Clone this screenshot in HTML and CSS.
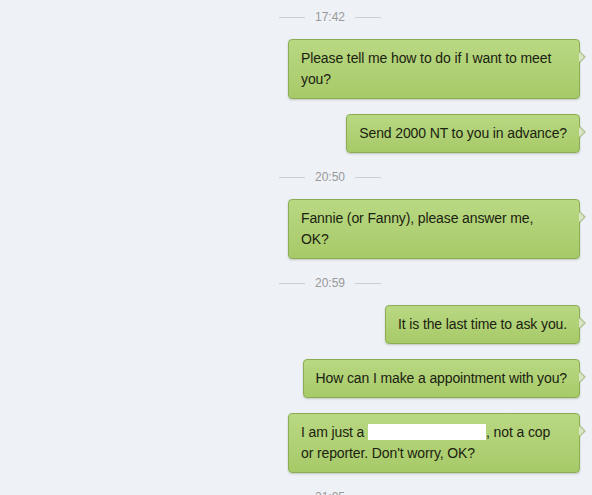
FILE: index.html
```html
<!DOCTYPE html>
<html lang="en">
<head>
    <meta charset="UTF-8">
    <meta name="viewport" content="width=device-width, initial-scale=1.0">
    <title>Chat</title>
    <link rel="stylesheet" href="styles.css">
</head>
<body>
    <div class="chat">
        <div class="time"><span>17:42</span></div>
        <div class="bubble wide">Please tell me how to do if I want to meet<br>you?</div>
        <div class="bubble">Send 2000 NT to you in advance?</div>

        <div class="time"><span>20:50</span></div>
        <div class="bubble wide">Fannie (or Fanny), please answer me,<br>OK?</div>

        <div class="time"><span>20:59</span></div>
        <div class="bubble">It is the last time to ask you.</div>
        <div class="bubble">How can I make a appointment with you?</div>
        <div class="bubble wide">I am just a <span class="redacted"></span>, not a cop<br>or reporter. Don't worry, OK?</div>

        <div class="time"><span>21:05</span></div>
    </div>
</body>
</html>
```

FILE: styles.css
```css
* {
    margin: 0;
    padding: 0;
    box-sizing: border-box;
}

body {
    font-family: 'Liberation Sans', Arial, sans-serif;
    background: #eef1f6;
    height: 495px;
    overflow: hidden;
}

.chat {
    display: flex;
    flex-direction: column;
    align-items: flex-end;
    padding: 8px 12px 0 80px;
}

.time {
    align-self: stretch;
    display: flex;
    align-items: center;
    justify-content: center;
    gap: 10px;
    height: 18px;
    margin: 15px 0 13px;
    font-size: 12px;
    color: #999;
}

.time:first-child {
    margin-top: 0;
}

.time::before,
.time::after {
    content: "";
    width: 26px;
    height: 1px;
    background: #cbcfd4;
}

.bubble {
    position: relative;
    max-width: 292px;
    padding: 8px 12px;
    font-size: 14px;
    line-height: 21px;
    letter-spacing: -0.12px;
    color: #1b2210;
    background: linear-gradient(to bottom, #b9d883 0%, #a7ca68 100%);
    border: 1px solid #8dad55;
    border-radius: 4px;
    box-shadow: 0 1px 2px rgba(60, 80, 30, 0.25);
}

.bubble.wide {
    width: 292px;
}

.bubble + .bubble {
    margin-top: 15px;
}

/* tail on the right */
.bubble::before {
    content: "";
    position: absolute;
    top: 11px;
    right: -7px;
    border-top: 6px solid transparent;
    border-bottom: 6px solid transparent;
    border-left: 6px solid #b3c495;
}

.bubble::after {
    content: "";
    position: absolute;
    top: 12px;
    right: -5px;
    border-top: 5px solid transparent;
    border-bottom: 5px solid transparent;
    border-left: 5px solid #dbe6c6;
}

.redacted {
    display: inline-block;
    width: 118px;
    height: 16px;
    vertical-align: -3px;
    background: #fff;
}
```
